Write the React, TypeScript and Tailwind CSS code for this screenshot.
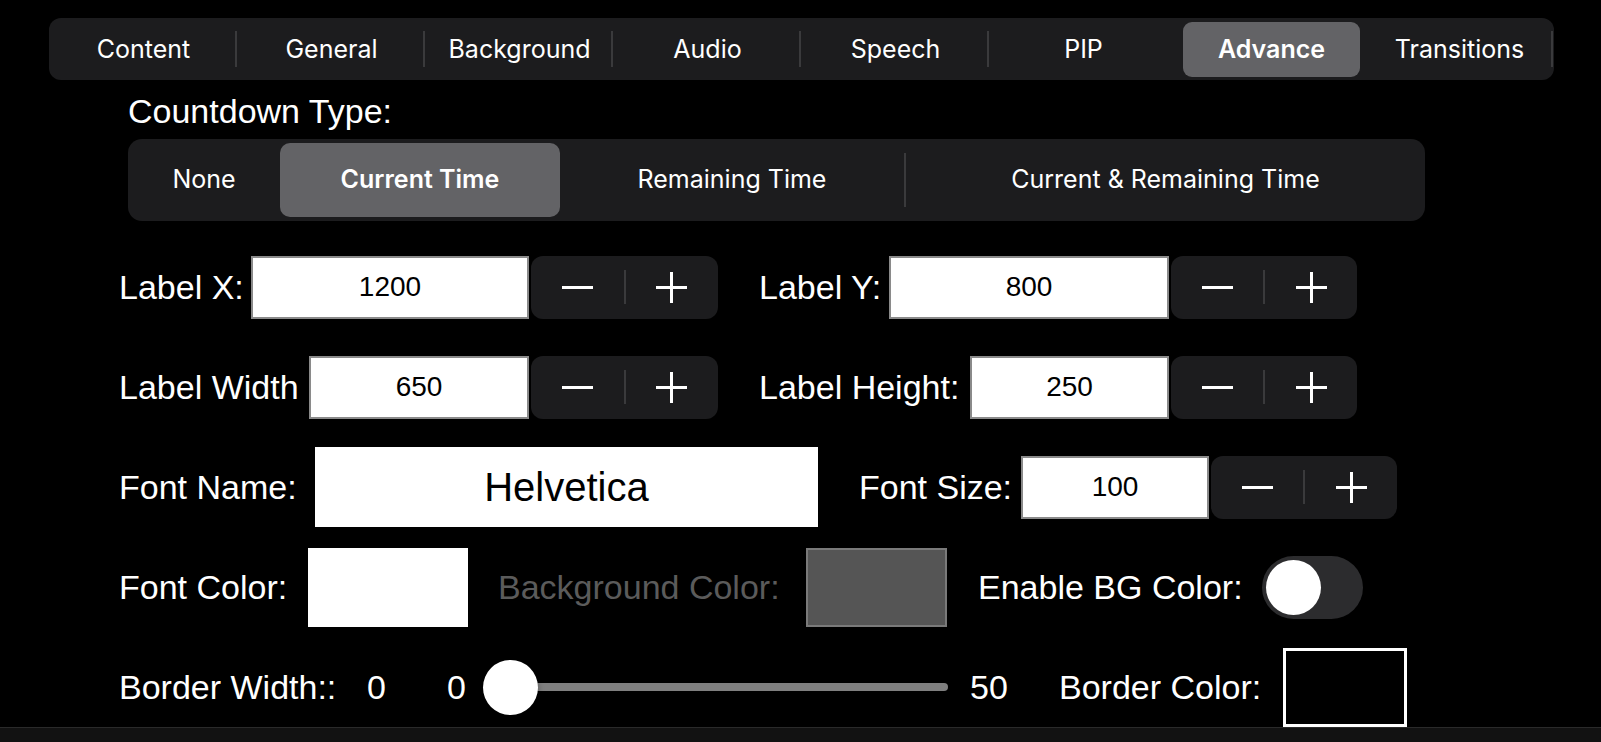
import React from 'react';

const tabs = ['Content', 'General', 'Background', 'Audio', 'Speech', 'PIP', 'Advance', 'Transitions'];
const selectedTab = 6;

const label = "font-['Liberation_Sans',Arial,sans-serif] text-[34px] text-white whitespace-nowrap";

function Minus() {
  return (
    <svg width="31" height="31" viewBox="0 0 31 31">
      <line x1="0" y1="15.5" x2="31" y2="15.5" stroke="white" strokeWidth="3" />
    </svg>
  );
}

function Plus() {
  return (
    <svg width="31" height="31" viewBox="0 0 31 31">
      <line x1="0" y1="15.5" x2="31" y2="15.5" stroke="white" strokeWidth="3" />
      <line x1="15.5" y1="0" x2="15.5" y2="31" stroke="white" strokeWidth="3" />
    </svg>
  );
}

function Stepper({ w }: { w: string }) {
  return (
    <div className={`${w} ml-[2px] h-[63px] rounded-[12px] bg-[#1c1c1e] flex items-center`}>
      <div className="flex-1 flex justify-center"><Minus /></div>
      <div className="w-[2px] h-[34px] bg-[#3a3a3c]" />
      <div className="flex-1 flex justify-center"><Plus /></div>
    </div>
  );
}

function NumField({ w, value }: { w: string; value: string }) {
  return (
    <div className={`${w} h-[63px] bg-white border-2 border-[#8a8a8a] flex items-center justify-center font-['Liberation_Sans',Arial,sans-serif] text-[28px] text-black`}>
      {value}
    </div>
  );
}

export default function App() {
  return (
    <div className="w-[1601px] h-[742px] bg-black overflow-hidden flex flex-col">
      {/* top tabs */}
      <div className="mt-[18px] ml-[49px] w-[1505px] h-[62px] rounded-[12px] bg-[#1c1c1e] flex items-center font-['Inter',sans-serif] text-[25px] text-white">
        {tabs.map((t, i) => {
          const sel = i === selectedTab;
          const hideSep = i === selectedTab || i + 1 === selectedTab;
          return (
            <div key={t} className="flex h-full w-[188px] items-center">
              <div className="flex-1 h-full pt-[4px] pb-[3px] pl-[6px] pr-[3px]">
                <div className={sel ? 'h-full rounded-[9px] bg-[#636366] flex items-center justify-center font-semibold' : 'h-full flex items-center justify-center font-normal'}>
                  {t}
                </div>
              </div>
              <div className={hideSep ? 'w-[2px] h-[36px] bg-transparent' : 'w-[2px] h-[36px] bg-[#3a3a3c]'} />
            </div>
          );
        })}
      </div>

      <div className={`${label} ml-[128px] h-[59px] flex items-center pt-[4px]`}>Countdown Type:</div>

      {/* countdown segmented */}
      <div className="ml-[128px] w-[1297px] h-[82px] rounded-[14px] bg-[#1c1c1e] flex items-center font-['Inter',sans-serif] text-[25px] text-white font-normal">
        <div className="w-[152px] flex justify-center">None</div>
        <div className="w-[280px] h-[74px] rounded-[10px] bg-[#636366] flex items-center justify-center font-semibold">Current Time</div>
        <div className="w-[344px] flex justify-center">Remaining Time</div>
        <div className="w-[2px] h-[54px] bg-[#3a3a3c]" />
        <div className="flex-1 flex justify-center">Current &amp; Remaining Time</div>
      </div>

      <div className="mt-[26px] pl-[119px] flex flex-col gap-[20px]">
        {/* row 1 */}
        <div className="h-[80px] flex items-center">
          <div className="flex items-center w-[599px]">
            <div className={`${label} w-[132px]`}>Label X:</div>
            <NumField w="w-[278px]" value="1200" />
            <Stepper w="w-[187px]" />
          </div>
          <div className="flex items-center ml-[41px]">
            <div className={`${label} w-[130px]`}>Label Y:</div>
            <NumField w="w-[280px]" value="800" />
            <Stepper w="w-[186px]" />
          </div>
        </div>

        {/* row 2 */}
        <div className="h-[80px] flex items-center">
          <div className="flex items-center w-[599px]">
            <div className={`${label} w-[190px]`}>Label Width</div>
            <NumField w="w-[220px]" value="650" />
            <Stepper w="w-[187px]" />
          </div>
          <div className="flex items-center ml-[41px]">
            <div className={`${label} w-[211px]`}>Label Height:</div>
            <NumField w="w-[199px]" value="250" />
            <Stepper w="w-[186px]" />
          </div>
        </div>

        {/* row 3 */}
        <div className="h-[80px] flex items-center">
          <div className={`${label} w-[196px]`}>Font Name:</div>
          <div className="w-[503px] h-[80px] bg-white flex items-center justify-center font-['Liberation_Sans',Arial,sans-serif] text-[40px] text-black">
            Helvetica
          </div>
          <div className={`${label} ml-[41px] w-[162px]`}>Font Size:</div>
          <NumField w="w-[188px]" value="100" />
          <Stepper w="w-[186px]" />
        </div>

        {/* row 4 */}
        <div className="h-[80px] flex items-center">
          <div className={`${label} w-[189px]`}>Font Color:</div>
          <div className="w-[160px] h-[79px] bg-white" />
          <div className="ml-[30px] w-[308px] font-['Liberation_Sans',Arial,sans-serif] text-[34px] text-[#5b5b5b] whitespace-nowrap">Background Color:</div>
          <div className="w-[141px] h-[79px] bg-[#555555] border-2 border-[#7a7a7a]" />
          <div className={`${label} ml-[31px] w-[284px]`}>Enable BG Color:</div>
          <div className="w-[101px] h-[63px] rounded-full bg-[#2c2c2e] p-[4px] flex items-center">
            <div className="w-[55px] h-[55px] rounded-full bg-white" />
          </div>
        </div>

        {/* row 5 */}
        <div className="h-[80px] flex items-center">
          <div className={`${label} w-[248px]`}>Border Width::</div>
          <div className={`${label} w-[80px]`}>0</div>
          <div className={`${label} w-[36px]`}>0</div>
          <div className="relative w-[465px] h-[55px] flex items-center">
            <div className="flex-1 ml-[27px] h-[8px] rounded-full bg-[#7f7f7f]" />
            <div className="absolute left-0 top-0 w-[55px] h-[55px] rounded-full bg-white shadow-[0_2px_6px_rgba(0,0,0,0.3)]" />
          </div>
          <div className={`${label} ml-[22px] w-[89px]`}>50</div>
          <div className={`${label} w-[224px]`}>Border Color:</div>
          <div className="w-[124px] h-[79px] bg-black border-[3px] border-white" />
        </div>
      </div>

      <div className="mt-auto h-[15px] bg-[#121212] border-t border-[#2a2a2a]" />
    </div>
  );
}
